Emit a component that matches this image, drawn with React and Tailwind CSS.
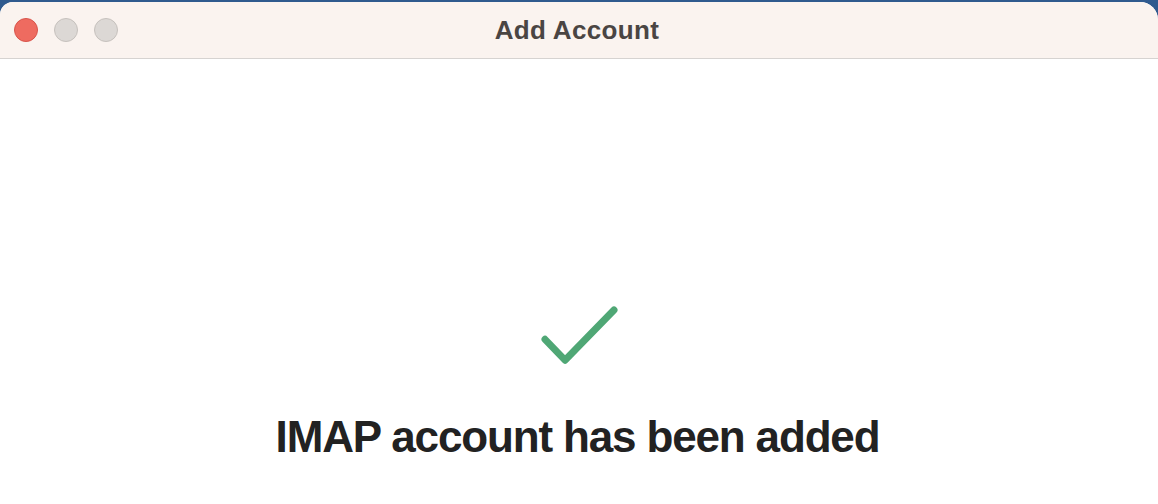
import React from 'react';

// Traffic-light button in the title bar
const Light = ({ fill, ring }) => (
  <span className={`block w-[24px] h-[24px] rounded-full border ${fill} ${ring}`}></span>
);

const App = () => {
  return (
    <div className="w-[1158px] h-[504px] bg-[#2f5a8e] pt-[2px] overflow-hidden">
      <div className="h-full bg-white rounded-tl-[13px] rounded-tr-[18px] overflow-hidden flex flex-col">
        {/* Title bar */}
        <div className="relative h-[57px] shrink-0 bg-[#faf3ef] border-b border-[#d6d3d1] flex items-center">
          <div className="flex items-center gap-[16px] pl-[14px]">
            <Light fill="bg-[#ee6b60]" ring="border-[#d8544b]" />
            <Light fill="bg-[#dcd8d5]" ring="border-[#c6c1bd]" />
            <Light fill="bg-[#dcd8d5]" ring="border-[#c6c1bd]" />
          </div>
          <div className="absolute inset-0 pr-[4px] flex items-center justify-center pointer-events-none">
            <span
              className="text-[26px] font-bold text-[#4a4543] tracking-[0.35px]"
              style={{ fontFamily: '"Liberation Sans", Arial, sans-serif' }}
            >
              Add Account
            </span>
          </div>
        </div>

        {/* Body */}
        <div className="flex-1 flex flex-col items-center pt-[241px] pr-[3px]">
          <svg width="90" height="70" viewBox="0 0 90 70" fill="none">
            <path
              d="M12 39.3 L32 60.2 L81 10"
              stroke="#4fa775"
              strokeWidth="7"
              strokeLinecap="round"
              strokeLinejoin="round"
            />
          </svg>
          <h1
            className="mt-[45px] text-[44px] leading-[44px] font-bold text-[#222222] tracking-[-1.15px]"
            style={{ fontFamily: '"Liberation Sans", Arial, sans-serif' }}
          >
            IMAP account has been added
          </h1>
        </div>
      </div>
    </div>
  );
};

export default App;
